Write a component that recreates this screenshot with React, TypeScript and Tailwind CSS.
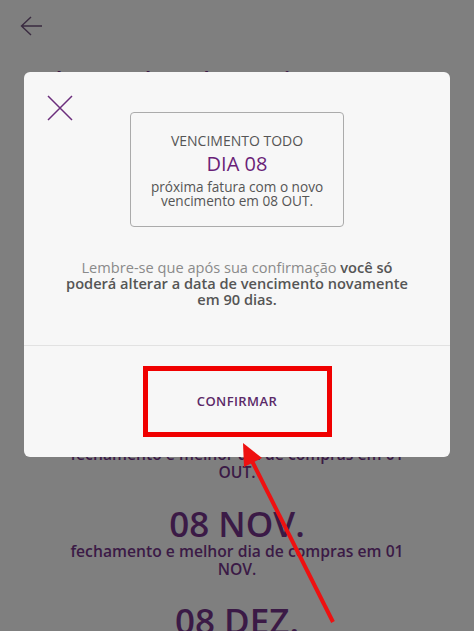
import React from 'react';

const font = { fontFamily: '"Open Sans", "Liberation Sans", sans-serif' };

const DateBlock: React.FC<{ date: string; close: string }> = ({ date, close }) => (
  <div className="flex flex-col items-center text-center text-[#3b1a46]">
    <span className="text-[35px] leading-[36px] font-semibold">{date}</span>
    <span className="text-[15.7px] leading-[18px] font-semibold">
      fechamento e melhor dia de compras em 01
      <br />
      {close}
    </span>
  </div>
);

export default function App() {
  return (
    <div className="relative w-[474px] h-[631px] overflow-hidden bg-[#7f7f7f]" style={font}>
      {/* page behind the dialog */}
      <div className="flex flex-col px-5 pt-4">
        <svg width="22" height="20" viewBox="0 0 22 20" fill="none" stroke="#3a2b40" strokeWidth="1.4">
          <path d="M22 10H1.5M11 1L1.5 10l9.5 9" />
        </svg>
        <h1 className="mt-[29px] pl-5 text-[24px] leading-[30px] font-semibold text-[#3b1a46]">
          Altere a data de vencimento
        </h1>
        <div className="mt-[314px] flex flex-col gap-[25px]">
          <DateBlock date="08 OUT." close="OUT." />
          <DateBlock date="08 NOV." close="NOV." />
          <DateBlock date="08 DEZ." close="DEZ." />
        </div>
      </div>

      {/* dialog */}
      <div className="absolute left-[24px] top-[72px] w-[426px] h-[385px] rounded-[6px] bg-[#f7f7f7] flex flex-col">
        <div className="relative h-[274px] border-b border-[#e2e2e2] flex flex-col items-center">
          <svg className="absolute left-[23px] top-[23px]" width="26" height="26" viewBox="0 0 26 26" stroke="#6b2d7c" strokeWidth="1.5">
            <path d="M1 1l24 24M25 1L1 25" />
          </svg>
          <div className="mt-[40px] w-[214px] h-[115px] rounded-[4px] border-[1.5px] border-[#ababab] flex flex-col items-center pt-[19px] text-center">
            <span className="text-[14px] leading-[18px] text-[#555]">VENCIMENTO TODO</span>
            <span className="mt-[2px] text-[20px] leading-[24px] text-[#6a1f78] font-medium">DIA 08</span>
            <span className="mt-[4px] text-[13.6px] leading-[14px] text-[#555]">
              próxima fatura com o novo
              <br />
              vencimento em 08 OUT.
            </span>
          </div>
          <p className="mt-[32px] text-center text-[14.6px] leading-[16px] text-[#8a8a8a]">
            Lembre-se que após sua confirmação <b className="font-semibold text-[#555]">você só</b>
            <br />
            <b className="font-semibold text-[#555]">poderá alterar a data de vencimento novamente</b>
            <br />
            <b className="font-semibold text-[#555]">em 90 dias.</b>
          </p>
        </div>
        <div className="flex-1 flex items-center justify-center">
          <button className="w-[189px] h-[71px] border-[5px] border-[#f00000] flex items-center justify-center text-[13px] font-semibold tracking-[0.4px] text-[#5b2a68]">
            CONFIRMAR
          </button>
        </div>
      </div>

      {/* annotation arrow */}
      <svg className="absolute inset-0 pointer-events-none" width="474" height="631" viewBox="0 0 474 631">
        <line x1="333" y1="622" x2="252" y2="461" stroke="#ee1111" strokeWidth="4" />
        <polygon points="243,443 262,458 244,467" fill="#ee1111" />
      </svg>
    </div>
  );
}
